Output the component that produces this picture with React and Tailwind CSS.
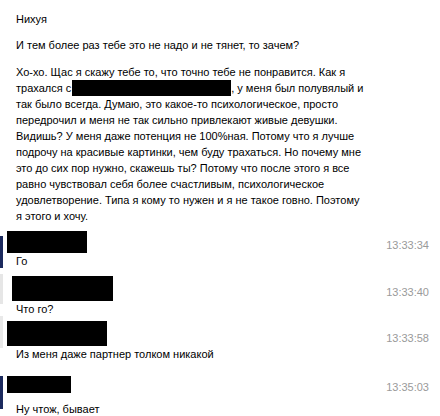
const paragraph = [
  'Хо-хо. Щас я скажу тебе то, что точно тебе не понравится. Как я',
  null,
  'так было всегда. Думаю, это какое-то психологическое, просто',
  'передрочил и меня не так сильно привлекают живые девушки.',
  'Видишь? У меня даже потенция не 100%ная. Потому что я лучше',
  'подрочу на красивые картинки, чем буду трахаться. Но почему мне',
  'это до сих пор нужно, скажешь ты? Потому что после этого я все',
  'равно чувствовал себя более счастливым, психологическое',
  'удовлетворение. Типа я кому то нужен и я не такое говно. Поэтому',
  'я этого и хочу.',
];

function Message({ time, text, boxClass, avatarClass, timeClass = '', className }) {
  return (
    <div className={`relative ${className}`}>
      <div className={`absolute left-0 w-[3px] ${avatarClass}`} />
      <div className="flex items-center justify-between pr-[11px]">
        <div className={`bg-black ${boxClass}`} />
        <span className={`text-[#9a9a9a] ${timeClass}`}>{time}</span>
      </div>
      <div className="pl-4 h-4 leading-4">{text}</div>
    </div>
  );
}

export default function App() {
  return (
    <div
      className="w-[440px] h-[416px] bg-white text-black text-[11px] leading-4 overflow-hidden"
      style={{ fontFamily: '"Liberation Sans", Arial, sans-serif' }}
    >
      <div className="pl-4 pt-[11px]">Нихуя</div>
      <div className="pl-4 mt-[10px]">И тем более раз тебе это не надо и не тянет, то зачем?</div>
      <div className="pl-4 mt-[11px]">
        {paragraph.map((line, i) =>
          line === null ? (
            <div key={i} className="flex items-center h-4">
              <span>трахался с</span>
              <span className="bg-black w-[159px] h-4 ml-px" />
              <span>, у меня был полувялый и</span>
            </div>
          ) : (
            <div key={i} className="h-4">{line}</div>
          )
        )}
      </div>

      <Message
        className="mt-[7px]"
        time="13:33:34"
        text="Го"
        boxClass="w-20 h-[22px] ml-[7px]"
        timeClass="mt-[6px]"
        avatarClass="top-[5px] h-[32px] bg-[#1c2a5e]"
      />
      <Message
        className="mt-[7px]"
        time="13:33:40"
        text="Что го?"
        boxClass="w-[101px] h-[25px] ml-3"
        timeClass="mt-[7px]"
        avatarClass="top-[-2px] h-[30px] bg-[#e6e6e6]"
      />
      <Message
        className="mt-[3px]"
        time="13:33:58"
        text="Из меня даже партнер толком никакой"
        boxClass="w-[100px] h-[25px] ml-[7px]"
        timeClass="mt-[10px]"
        avatarClass="top-[-4px] h-[32px] bg-[#e9e9e9]"
      />
      <Message
        className="mt-[14px]"
        time="13:35:03"
        text="Ну чтож, бывает"
        boxClass="w-16 h-[17px] ml-[7px] mb-[8px]"
        timeClass="-mt-[3px]"
        avatarClass="top-0 h-[33px] bg-[#1c2a5e]"
      />
    </div>
  );
}
